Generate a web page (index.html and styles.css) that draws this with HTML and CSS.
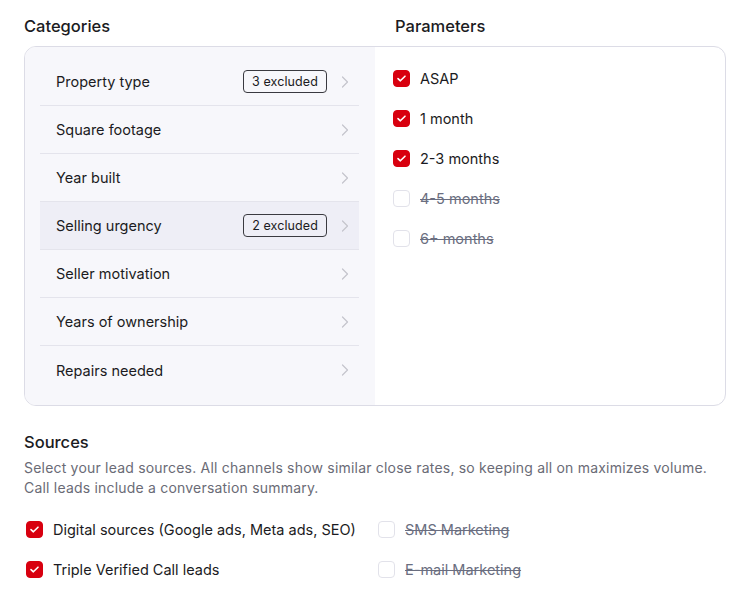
FILE: index.html
```html
<!DOCTYPE html>
<html>
<head>
<meta charset="utf-8">
<link rel="stylesheet" href="styles.css">
</head>
<body>
<div class="page">
  <div class="heads">
    <h2 class="title">Categories</h2>
    <h2 class="title">Parameters</h2>
  </div>
  <div class="card">
    <div class="cats">
      <div class="cat"><span class="cat-name">Property type</span><span class="badge">3 excluded</span><span class="chev"><svg width="8" height="12" viewBox="0 0 8 12"><path d="M1.5 1 L6.5 6 L1.5 11" fill="none" stroke="currentColor" stroke-width="1.2" stroke-linecap="round" stroke-linejoin="round"/></svg></span></div>
      <div class="cat"><span class="cat-name">Square footage</span><span class="chev"><svg width="8" height="12" viewBox="0 0 8 12"><path d="M1.5 1 L6.5 6 L1.5 11" fill="none" stroke="currentColor" stroke-width="1.2" stroke-linecap="round" stroke-linejoin="round"/></svg></span></div>
      <div class="cat"><span class="cat-name">Year built</span><span class="chev"><svg width="8" height="12" viewBox="0 0 8 12"><path d="M1.5 1 L6.5 6 L1.5 11" fill="none" stroke="currentColor" stroke-width="1.2" stroke-linecap="round" stroke-linejoin="round"/></svg></span></div>
      <div class="cat active"><span class="cat-name">Selling urgency</span><span class="badge">2 excluded</span><span class="chev"><svg width="8" height="12" viewBox="0 0 8 12"><path d="M1.5 1 L6.5 6 L1.5 11" fill="none" stroke="currentColor" stroke-width="1.2" stroke-linecap="round" stroke-linejoin="round"/></svg></span></div>
      <div class="cat"><span class="cat-name">Seller motivation</span><span class="chev"><svg width="8" height="12" viewBox="0 0 8 12"><path d="M1.5 1 L6.5 6 L1.5 11" fill="none" stroke="currentColor" stroke-width="1.2" stroke-linecap="round" stroke-linejoin="round"/></svg></span></div>
      <div class="cat"><span class="cat-name">Years of ownership</span><span class="chev"><svg width="8" height="12" viewBox="0 0 8 12"><path d="M1.5 1 L6.5 6 L1.5 11" fill="none" stroke="currentColor" stroke-width="1.2" stroke-linecap="round" stroke-linejoin="round"/></svg></span></div>
      <div class="cat"><span class="cat-name">Repairs needed</span><span class="chev"><svg width="8" height="12" viewBox="0 0 8 12"><path d="M1.5 1 L6.5 6 L1.5 11" fill="none" stroke="currentColor" stroke-width="1.2" stroke-linecap="round" stroke-linejoin="round"/></svg></span></div>
    </div>
    <div class="params">
      <label class="opt"><span class="box on"><svg width="11" height="9" viewBox="0 0 11 9"><path d="M2 4.6 L4.4 6.8 L9 2.2" fill="none" stroke="#fff" stroke-width="1.6" stroke-linecap="round" stroke-linejoin="round"/></svg></span><span class="opt-text">ASAP</span></label>
      <label class="opt"><span class="box on"><svg width="11" height="9" viewBox="0 0 11 9"><path d="M2 4.6 L4.4 6.8 L9 2.2" fill="none" stroke="#fff" stroke-width="1.6" stroke-linecap="round" stroke-linejoin="round"/></svg></span><span class="opt-text">1 month</span></label>
      <label class="opt"><span class="box on"><svg width="11" height="9" viewBox="0 0 11 9"><path d="M2 4.6 L4.4 6.8 L9 2.2" fill="none" stroke="#fff" stroke-width="1.6" stroke-linecap="round" stroke-linejoin="round"/></svg></span><span class="opt-text">2-3 months</span></label>
      <label class="opt off"><span class="box"></span><span class="opt-text">4-5 months</span></label>
      <label class="opt off"><span class="box"></span><span class="opt-text">6+ months</span></label>
    </div>
  </div>

  <h2 class="title sources-title">Sources</h2>
  <p class="desc">Select your lead sources. All channels show similar close rates, so keeping all on maximizes volume. Call leads include a conversation summary.</p>
  <div class="sources">
    <label class="opt src"><span class="box on"><svg width="11" height="9" viewBox="0 0 11 9"><path d="M2 4.6 L4.4 6.8 L9 2.2" fill="none" stroke="#fff" stroke-width="1.6" stroke-linecap="round" stroke-linejoin="round"/></svg></span><span class="opt-text">Digital sources (Google ads, Meta ads, SEO)</span></label>
    <label class="opt src off"><span class="box"></span><span class="opt-text">SMS Marketing</span></label>
    <label class="opt src"><span class="box on"><svg width="11" height="9" viewBox="0 0 11 9"><path d="M2 4.6 L4.4 6.8 L9 2.2" fill="none" stroke="#fff" stroke-width="1.6" stroke-linecap="round" stroke-linejoin="round"/></svg></span><span class="opt-text">Triple Verified Call leads</span></label>
    <label class="opt src off"><span class="box"></span><span class="opt-text">E-mail Marketing</span></label>
  </div>
</div>
</body>
</html>
```
FILE: styles.css
```css
* { box-sizing: border-box; }
html, body { margin: 0; padding: 0; background: #fff; }
body {
  font-family: "Inter", "Open Sans", sans-serif;
  color: #1b1b22;
  -webkit-font-smoothing: antialiased;
}
.page { padding: 14px 25px 0 24px; }
.heads { display: grid; grid-template-columns: 371px 1fr; }
.title {
  margin: 0;
  font-size: 16.5px;
  font-weight: 500;
  line-height: 24px;
  color: #1b1b22;
}
.card {
  margin-top: 8px;
  display: grid;
  grid-template-columns: 350px 1fr;
  border: 1px solid #dcdce6;
  border-radius: 12px;
  overflow: hidden;
  height: 360px;
}
.cats {
  background: #f7f7fb;
  padding: 11px 16px 0 15px;
  display: flex;
  flex-direction: column;
}
.cat {
  height: 48px;
  display: flex;
  align-items: center;
  padding: 0 10px 0 16px;
  border-bottom: 1px solid #e4e4ec;
  font-size: 14.5px;
}
.cat:last-child { border-bottom: none; }
.cat.active { background: #eeeef6; }
.cat-name { flex: 1; }
.badge {
  border: 1px solid #3a3a40;
  border-radius: 4px;
  font-size: 12.5px;
  padding: 0 8px 0 8.5px;
  height: 23px;
  line-height: 21px;
  margin-right: 14px;
  letter-spacing: 0.1px;
}
.chev { color: #c4c4cc; display: flex; width: 8px; }
.params {
  padding: 21px 18px;
  display: flex;
  flex-direction: column;
  gap: 20px;
}
.opt {
  display: flex;
  align-items: center;
  gap: 10px;
  font-size: 14.5px;
  height: 20px;
}
.box {
  width: 17px;
  height: 17px;
  border-radius: 4px;
  border: 1.5px solid #e2e2ea;
  background: #fff;
  display: flex;
  align-items: center;
  justify-content: center;
  flex: none;
}
.box.on { background: #d8000f; border-color: #d8000f; }
.opt.off .opt-text { color: #6a6e80; text-decoration: line-through; }
.sources-title { margin-top: 24px; }
.desc {
  margin: 4px 0 0;
  font-size: 14px;
  line-height: 20px;
  color: #6a6b76;
  letter-spacing: 0.2px;
}
.sources {
  margin-top: 21px;
  display: grid;
  grid-template-columns: 352px 1fr;
  row-gap: 20px;
  padding-left: 2px;
}
.src { gap: 10px; }
```
